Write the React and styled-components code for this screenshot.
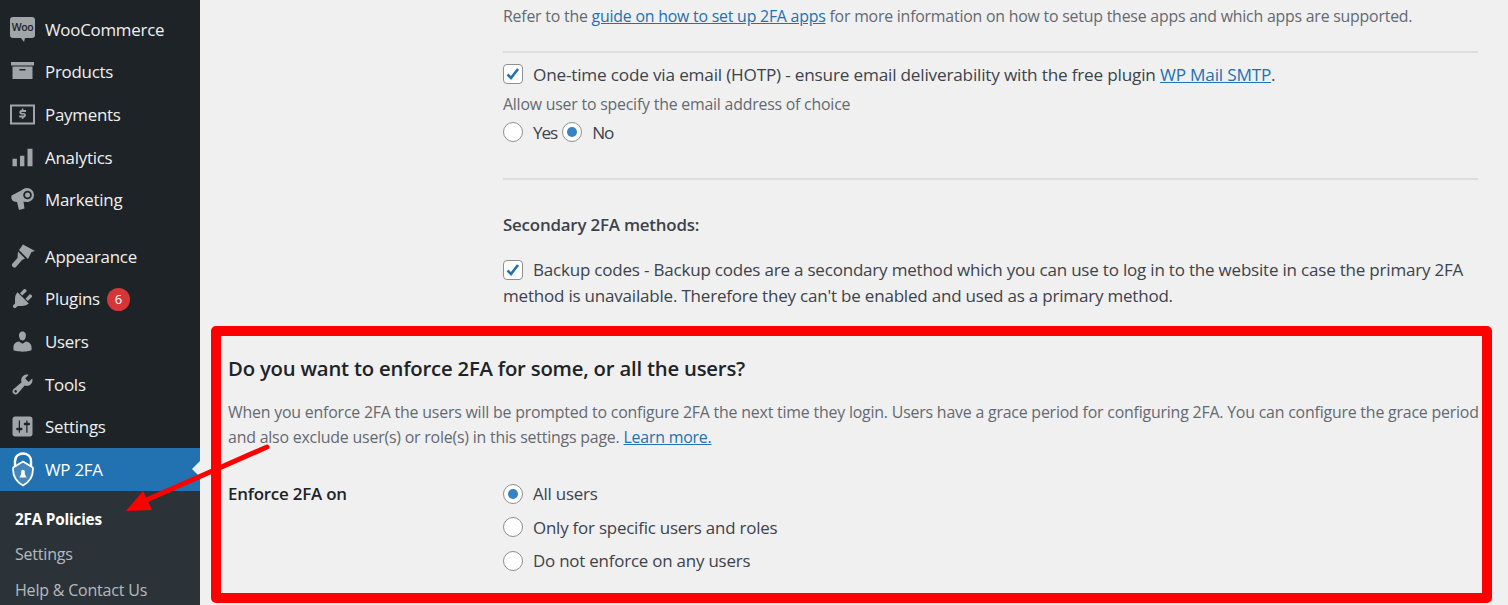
import React from 'react';
import styled, { createGlobalStyle } from 'styled-components';

const GlobalStyle = createGlobalStyle`
  html, body { margin: 0; padding: 0; height: 100%; overflow: hidden; background: #f0f0f1; }
  body { font-family: "Open Sans", "Noto Sans", "Liberation Sans", sans-serif; }
`;

const Page = styled.div`
  position: relative;
  display: grid;
  grid-template-columns: 200px 1fr;
  width: 1508px;
  height: 605px;
  overflow: hidden;
  background: #f0f0f1;
`;

const Sidebar = styled.nav`
  background: #1d2327;
  padding-top: 8px;
`;

const MenuGroup = styled.div`
  margin-bottom: ${(p) => p.$gap || 0}px;
`;

const MenuItem = styled.div`
  position: relative;
  display: flex;
  align-items: center;
  height: 42.6px;
  padding-left: 10px;
  color: ${(p) => (p.$active ? '#fff' : '#f0f0f1')};
  background: ${(p) => (p.$active ? '#2271b1' : 'transparent')};
  font-size: 16.9px;
  letter-spacing: -0.25px;
`;

const IconSlot = styled.span`
  display: flex;
  align-items: center;
  justify-content: center;
  width: 25px;
  height: 25px;
  margin-right: 10px;
  color: #a0a5aa;
  flex: none;
`;

const WooBubble = styled.span`
  position: relative;
  display: flex;
  align-items: center;
  justify-content: center;
  width: 25px;
  height: 21px;
  margin-top: -4px;
  border-radius: 3px;
  background: #a0a5aa;
  color: #1d2327;
  font-size: 10.5px;
  font-weight: 600;
  letter-spacing: -0.4px;
  &::after {
    content: '';
    position: absolute;
    left: 11px;
    bottom: -4px;
    border-top: 4px solid #a0a5aa;
    border-left: 3px solid transparent;
    border-right: 1px solid transparent;
  }
`;

const CountBadge = styled.span`
  display: flex;
  align-items: center;
  justify-content: center;
  width: 23px;
  height: 23px;
  margin: 1px 0 0 7px;
  border-radius: 50%;
  background: #d63638;
  color: #fff;
  font-size: 13px;
  letter-spacing: 0;
`;

const ActiveNotch = styled.span`
  position: absolute;
  right: 0;
  top: 50%;
  margin-top: -8px;
  border: 8px solid transparent;
  border-right-color: #f0f0f1;
  border-left-width: 0;
`;

const SubMenu = styled.div`
  display: flex;
  flex-direction: column;
  gap: 13px;
  padding: 17px 0 0 15px;
  height: 200px;
  background: #2c3338;
`;

const SubItem = styled.div`
  color: ${(p) => (p.$current ? '#fff' : 'rgba(240, 246, 252, 0.7)')};
  font-size: ${(p) => (p.$current ? 15.3 : 16)}px;
  font-weight: ${(p) => (p.$current ? 700 : 400)};
  line-height: 22.6px;
  letter-spacing: -0.2px;
`;

const Main = styled.main`
  padding-left: 11px;
  color: #3c434a;
  font-size: 16.9px;
  letter-spacing: -0.2px;
`;

const Options = styled.section`
  display: flex;
  flex-direction: column;
  height: 326px;
  margin-left: 292px;
  width: 975px;
`;

const Line = styled.div`
  height: ${(p) => p.$h}px;
  padding-top: ${(p) => p.$pad || 0}px;
  margin-bottom: ${(p) => p.$after || 0}px;
  display: flex;
  align-items: center;
  font-weight: ${(p) => p.$weight || 400};
`;

const MutedLine = styled(Line)`
  color: #646970;
  font-size: 15.85px;
`;

const ChoiceLine = styled(Line)`
  letter-spacing: -1.1px;
  font-size: 17.2px;
`;

const EmailLine = styled(Line)`
  font-size: 17.2px;
`;

const Rule = styled.hr`
  width: 100%;
  height: 2px;
  margin: ${(p) => p.$top}px 0 ${(p) => p.$bottom}px;
  border: 0;
  background: #dddddd;
`;

const TextLink = styled.a`
  color: #2271b1;
  text-decoration: underline;
  cursor: pointer;
`;

const CheckBox = styled.span`
  display: flex;
  align-items: center;
  justify-content: center;
  width: 20px;
  height: 20px;
  margin-right: 10px;
  flex: none;
  box-sizing: border-box;
  border: 1.25px solid #8c8f94;
  border-radius: 4px;
  background: #fff;
  color: #2271b1;
`;

const Radio = styled.span`
  position: relative;
  width: 20px;
  height: 20px;
  margin: 0 10px 0 ${(p) => p.$before || 0}px;
  flex: none;
  box-sizing: border-box;
  border: 1.25px solid #8c8f94;
  border-radius: 50%;
  background: #fff;
  &::after {
    content: '';
    display: ${(p) => (p.$on ? 'block' : 'none')};
    position: absolute;
    inset: 3.75px;
    border-radius: 50%;
    background: #3582c4;
  }
`;

const BackupRow = styled.div`
  position: relative;
  text-indent: 30px;
  font-size: 17px;
  line-height: 26px;
`;

const BackupBox = styled(CheckBox)`
  position: absolute;
  left: 0;
  top: 3px;
`;

const Highlight = styled.section`
  box-sizing: border-box;
  width: 1281px;
  height: 277px;
  padding: 18.5px 4px 0 7px;
  border: 10px solid #f00;
  border-radius: 5px;
`;

const Heading = styled.h2`
  margin: 0;
  color: #1d2327;
  font-size: 20.3px;
  font-weight: 600;
  line-height: 26px;
  letter-spacing: -0.2px;
`;

const Intro = styled.p`
  margin: 19.5px 0 0;
  color: #646970;
  font-size: 15.9px;
  line-height: 25px;
  white-space: nowrap;
  letter-spacing: -0.2px;
`;

const EnforceGrid = styled.div`
  display: grid;
  grid-template-columns: 275px 1fr;
  margin-top: 27px;
`;

const EnforceLabel = styled.div`
  color: #1d2327;
  font-weight: 600;
  line-height: 33.5px;
`;

const EnforceOption = styled.div`
  display: flex;
  align-items: center;
  height: 33.5px;
`;

const ArrowLayer = styled.svg`
  position: absolute;
  left: 0;
  top: 0;
  pointer-events: none;
`;

const Dash = ({ d }) => (
  <svg width="25" height="25" viewBox="0 0 20 20" fill="currentColor">
    <path d={d} />
  </svg>
);

const paths = {
  analytics: 'M2 11h3.5v6H2z M8 8.5h3.500V17H8z M14 3h4v14h-4z',
  plugins: 'M13.11 4.36L9.87 7.6 8 5.73l3.24-3.24c.35-.34 1.05-.2 1.56.32.52.51.66 1.21.31 1.55zm-8 1.77l.91-1.12 9.01 9.01-1.19.84c-.71.71-2.63 1.16-3.82 1.16H6.14L4.9 17.26c-.59.59-1.54.59-2.12 0-.59-.58-.59-1.53 0-2.12l1.24-1.24v-3.88c0-1.13.4-3.19 1.09-3.89zm7.26 3.97l3.24-3.24c.34-.35 1.04-.21 1.55.31.52.51.66 1.21.31 1.55l-3.24 3.25z',
  users: 'M10 9.25c-2.27 0-2.73-3.44-2.73-3.44C7 4.02 7.82 2 9.97 2c2.16 0 2.98 2.02 2.71 3.81 0 0-.41 3.44-2.68 3.44zm0 2.57L12.72 10c2.39 0 4.52 2.33 4.52 4.53v2.49s-3.65 1.13-7.24 1.13c-3.65 0-7.24-1.13-7.24-1.13v-2.49c0-2.25 1.94-4.48 4.47-4.48z',
  tools: 'M16.68 9.77c-1.34 1.34-3.3 1.67-4.95.99l-5.41 6.52c-.99.99-2.59.99-3.58 0s-.99-2.59 0-3.57l6.52-5.42c-.68-1.65-.35-3.61.99-4.95 1.28-1.28 3.12-1.62 4.72-1.06l-2.89 2.89 2.82 2.82 2.86-2.87c.53 1.58.18 3.39-1.08 4.65zM3.81 16.21c.4.39 1.04.39 1.43 0 .4-.4.4-1.04 0-1.43-.39-.4-1.03-.4-1.43 0-.39.39-.39 1.03 0 1.43z',
  settings: 'M18 16V4c0-1.1-.9-2-2-2H4c-1.1 0-2 .9-2 2v12c0 1.1.9 2 2 2h12c1.1 0 2-.9 2-2zM8 11h1c.55 0 1 .45 1 1s-.45 1-1 1H8v1.5c0 .28-.22.5-.5.5s-.5-.22-.5-.5V13H6c-.55 0-1-.45-1-1s.45-1 1-1h1V5.5c0-.28.22-.5.5-.5s.5.22.5.5V11zm5-2h-1c-.55 0-1-.45-1-1s.45-1 1-1h1V5.500c0-.28.22-.5.5-.5s.5.22.5.5V7h1c.55 0 1 .45 1 1s-.45 1-1 1h-1v5.500c0 .28-.22.5-.5.5s-.5-.22-.5-.5V9z',
};

const ProductsIcon = () => (
  <svg width="25" height="25" viewBox="0 0 25 25" fill="currentColor">
    <path fillRule="evenodd" d="M1 3h23v3.500H1zM2.500 7.500h20V20h-20zM9.500 10v1.500h6V10z" />
  </svg>
);

const PaymentsIcon = () => (
  <svg width="25" height="25" viewBox="0 0 25 25" fill="currentColor">
    <path fillRule="evenodd" d="M0 2.500h25v20H0zM2 4.500v16h21v-16z" />
    <path d="M11.800 6.500h1.600v1.600h2.600v2h-4.300c-.5 0-.5.900 0 .900h2.200c2.700 0 2.700 4.400 0 4.400h-.5v1.600h-1.600v-1.600H9.200v-2h4.400c.5 0 .5-.9 0-.9h-2.200c-2.700 0-2.700-4.400 0-4.400h.4z" />
  </svg>
);

const MarketingIcon = () => (
  <svg width="25" height="25" viewBox="0 0 25 25">
    <path fill="currentColor" d="M1.500 8.500L15 1.500l4 13.500-5.500-.5 1 7-5.500 1.500-2-8-3-.5C1.500 13.500 1 11 1.500 8.500z" />
    <circle cx="17" cy="8" r="7" fill="currentColor" />
    <circle cx="17.500" cy="8" r="4.300" fill="#1d2327" />
    <circle cx="17.500" cy="8" r="2.500" fill="currentColor" />
  </svg>
);

const AppearanceIcon = () => (
  <svg width="25" height="25" viewBox="0 0 25 25" fill="currentColor">
    <path d="M13 .5L25 7l-3.500 1L18 15 9 6z" />
    <path d="M8 7.500l7 7-3 1.500-6 7c-2 2-5.500-1-3.500-3.500l5-5.500z" />
  </svg>
);

const ShieldLogo = () => (
  <svg width="22" height="35" viewBox="0 0 22 35" fill="none" stroke="#fff">
    <path d="M3 14V9.500C3 4 7 1.500 11 1.500s8 2.500 8 8V14" strokeWidth="2.400" />
    <path d="M1.200 15.500L11 9.500l9.800 6c.8 8.500-3.300 14.500-9.800 18-6.500-3.500-10.600-9.500-9.800-18z" strokeWidth="1.800" fill="rgba(255,255,255,0.16)" />
    <path d="M7.500 25.500l1.700-3.500v-2.500a1.800 1.800 0 0 1 3.600 0V22l1.700 3.500z" fill="#fff" strokeWidth="0" />
  </svg>
);

const CheckMark = () => (
  <svg width="16" height="16" viewBox="0 0 16 16" fill="none" stroke="currentColor" strokeWidth="2.600">
    <path d="M2.500 8.500l3.500 3.500 7-9" />
  </svg>
);

const mainMenu = [
  { label: 'WooCommerce', icon: <WooBubble>Woo</WooBubble> },
  { label: 'Products', icon: <ProductsIcon /> },
  { label: 'Payments', icon: <PaymentsIcon /> },
  { label: 'Analytics', icon: <Dash d={paths.analytics} /> },
  { label: 'Marketing', icon: <MarketingIcon /> },
];

const lowerMenu = [
  { label: 'Appearance', icon: <AppearanceIcon /> },
  { label: 'Plugins', icon: <Dash d={paths.plugins} />, badge: 6 },
  { label: 'Users', icon: <Dash d={paths.users} /> },
  { label: 'Tools', icon: <Dash d={paths.tools} /> },
  { label: 'Settings', icon: <Dash d={paths.settings} /> },
];

function Menu({ items }) {
  return items.map((item) => (
    <MenuItem key={item.label}>
      <IconSlot>{item.icon}</IconSlot>
      {item.label}
      {item.badge && <CountBadge>{item.badge}</CountBadge>}
    </MenuItem>
  ));
}

export default function App() {
  return (
    <Page>
      <GlobalStyle />
      <Sidebar>
        <MenuGroup $gap={14}>
          <Menu items={mainMenu} />
        </MenuGroup>
        <MenuGroup>
          <Menu items={lowerMenu} />
        </MenuGroup>
        <MenuItem $active>
          <IconSlot><ShieldLogo /></IconSlot>
          WP 2FA
          <ActiveNotch />
        </MenuItem>
        <SubMenu>
          <SubItem $current>2FA Policies</SubItem>
          <SubItem>Settings</SubItem>
          <SubItem>Help &amp; Contact Us</SubItem>
        </SubMenu>
      </Sidebar>

      <Main>
        <Options>
          <MutedLine $h={32}>
            <span>Refer to the <TextLink>guide on how to set up 2FA apps</TextLink> for more information on how to setup these apps and which apps are supported.</span>
          </MutedLine>
          <Rule $top={19} $bottom={6} />
          <EmailLine $h={30}>
            <CheckBox><CheckMark /></CheckBox>
            <span>One-time code via email (HOTP) - ensure email deliverability with the free plugin <TextLink>WP Mail SMTP</TextLink>.</span>
          </EmailLine>
          <MutedLine $h={26} $pad={2}>Allow user to specify the email address of choice</MutedLine>
          <ChoiceLine $h={30}>
            <Radio />
            <span>Yes</span>
            <Radio $on $before={5} />
            <span>No</span>
          </ChoiceLine>
          <Rule $top={31} $bottom={29} />
          <Line $h={30} $weight={600} $after={18}>Secondary 2FA methods:</Line>
          <BackupRow>
            <BackupBox><CheckMark /></BackupBox>
            Backup codes - Backup codes are a secondary method which you can use to log in to the website in case the primary 2FA method is unavailable. Therefore they can't be enabled and used as a primary method.
          </BackupRow>
        </Options>

        <Highlight>
          <Heading>Do you want to enforce 2FA for some, or all the users?</Heading>
          <Intro>
            When you enforce 2FA the users will be prompted to configure 2FA the next time they login. Users have a grace period for configuring 2FA. You can configure the grace period
            <br />
            and also exclude user(s) or role(s) in this settings page. <TextLink>Learn more.</TextLink>
          </Intro>
          <EnforceGrid>
            <EnforceLabel>Enforce 2FA on</EnforceLabel>
            <div>
              <EnforceOption><Radio $on />All users</EnforceOption>
              <EnforceOption><Radio />Only for specific users and roles</EnforceOption>
              <EnforceOption><Radio />Do not enforce on any users</EnforceOption>
            </div>
          </EnforceGrid>
        </Highlight>
      </Main>

      <ArrowLayer width="1508" height="605" viewBox="0 0 1508 605">
        <path d="M267 447L142 502" stroke="#f00" strokeWidth="5" strokeLinecap="round" />
        <path d="M126 511L143 491L152 510z" fill="#f00" />
      </ArrowLayer>
    </Page>
  );
}
